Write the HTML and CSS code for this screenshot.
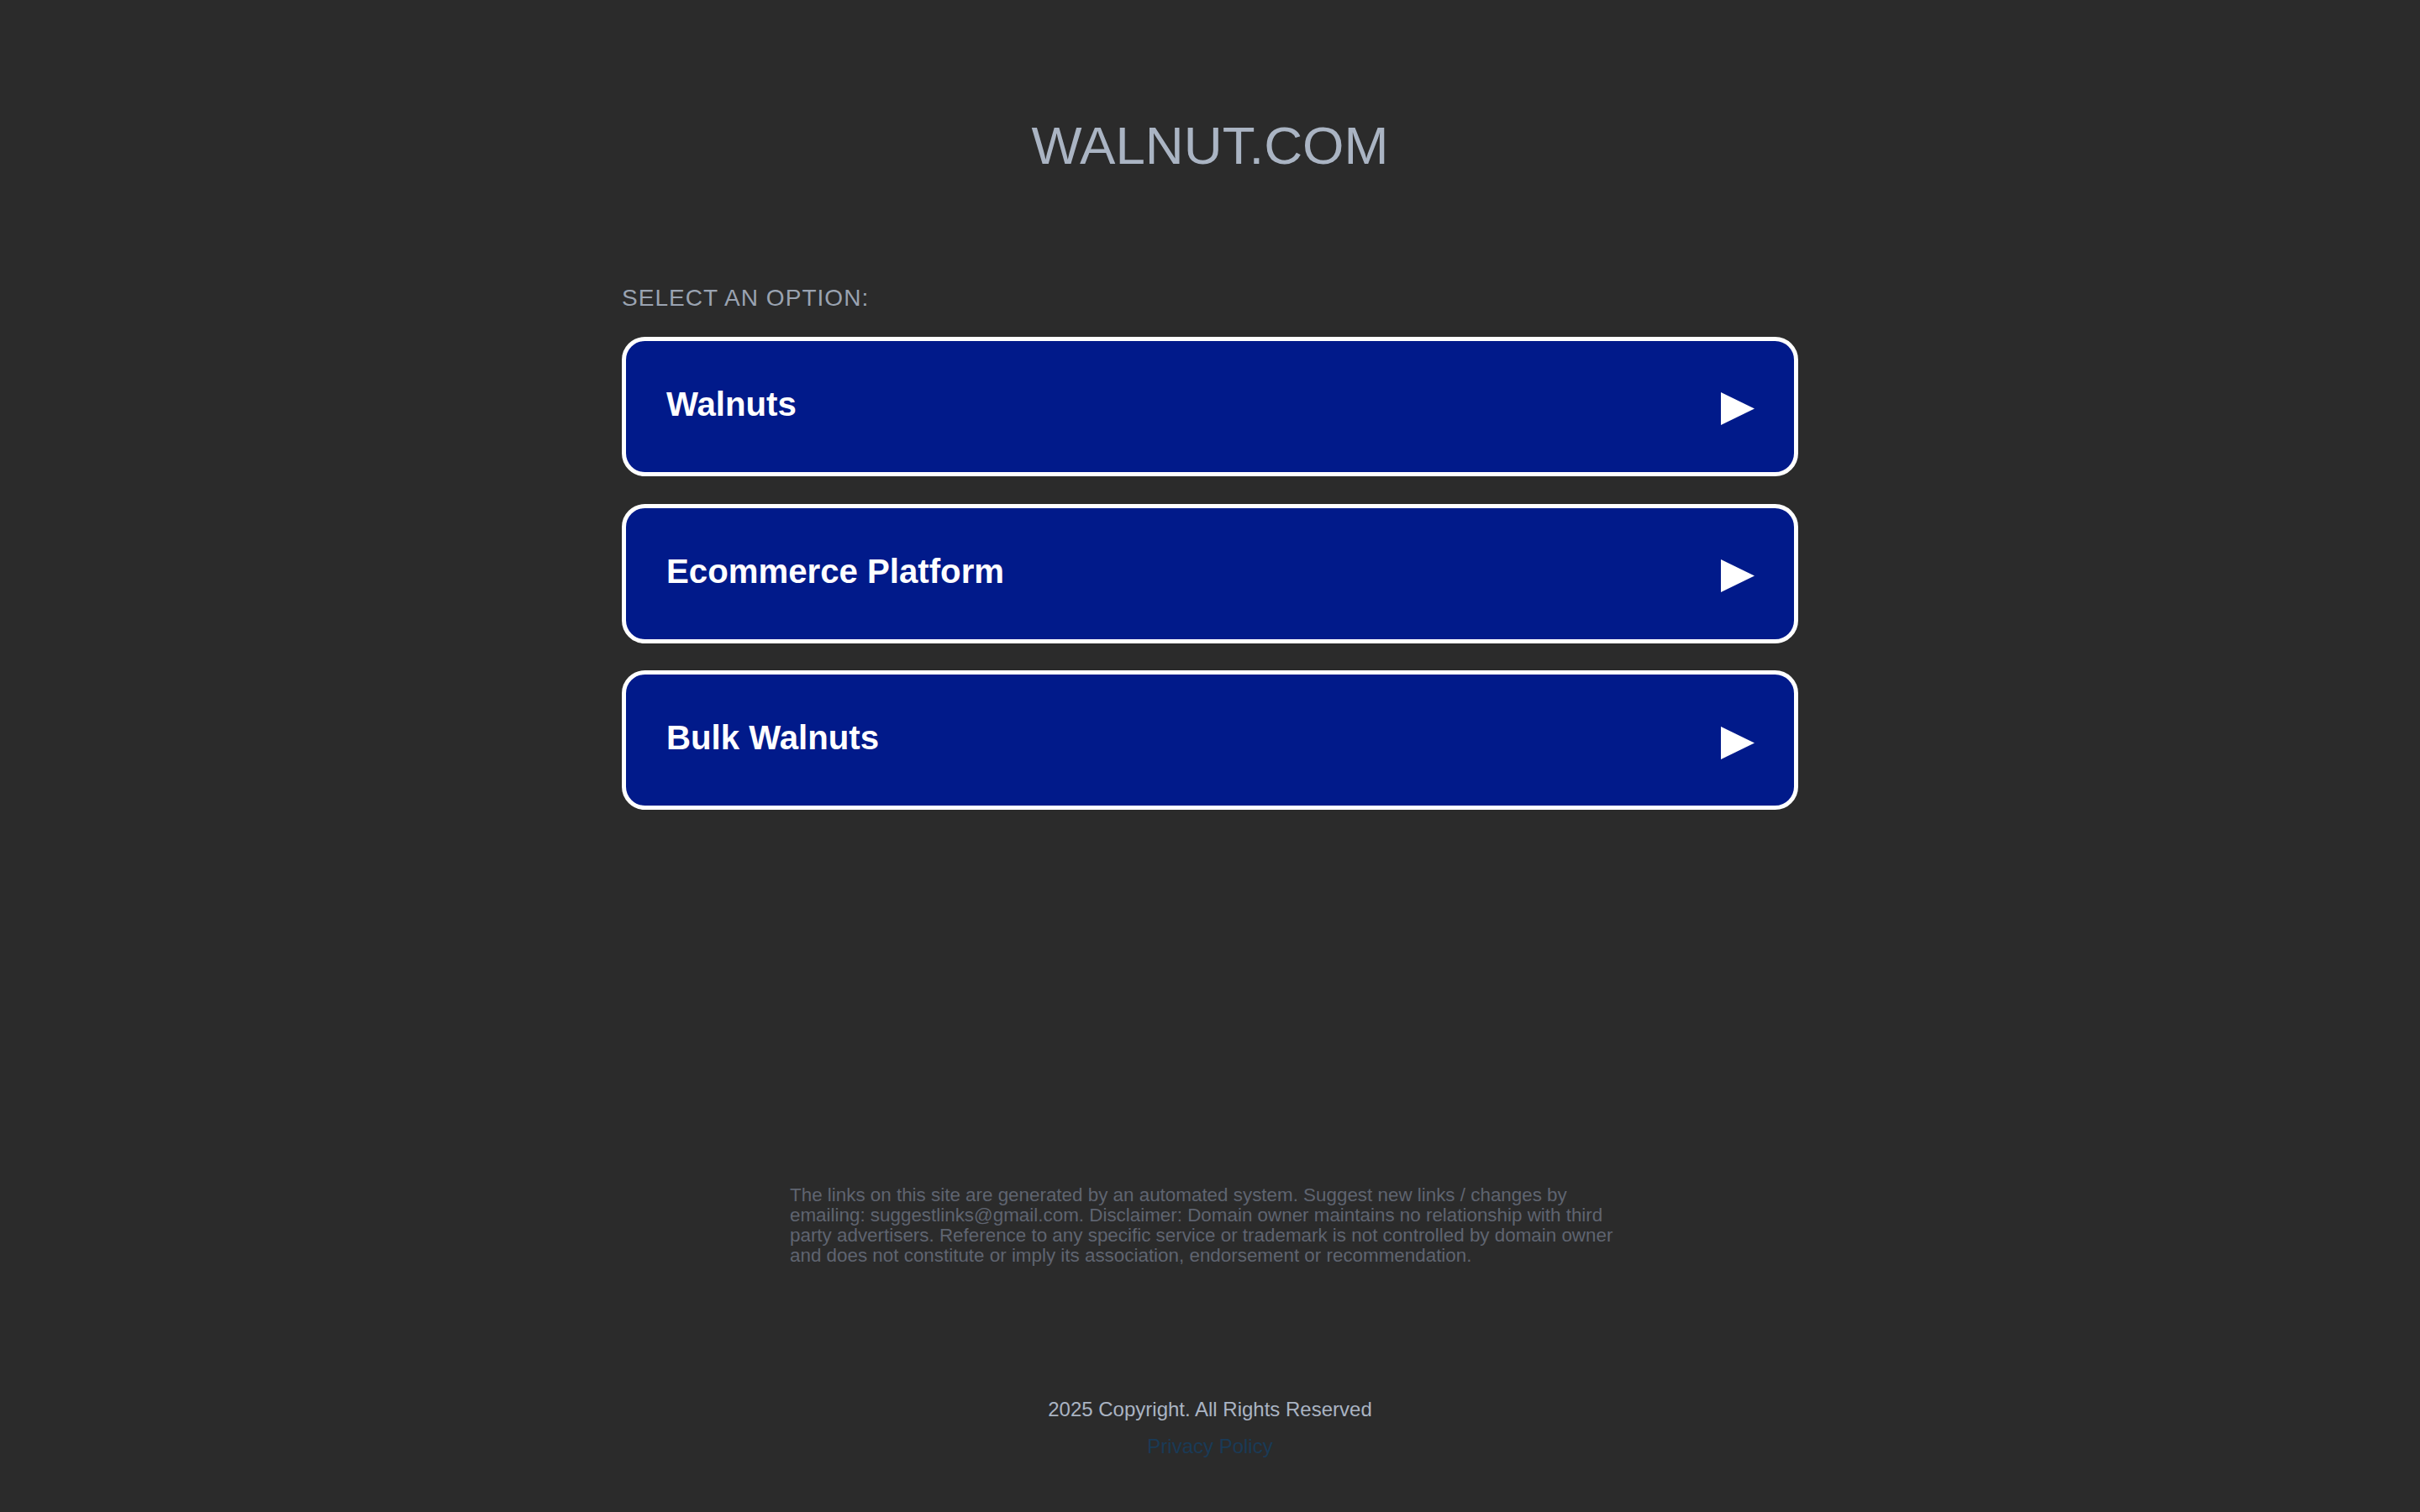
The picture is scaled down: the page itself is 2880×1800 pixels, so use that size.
FILE: index.html
```html
<!DOCTYPE html>
<html lang="en">
<head>
<meta charset="utf-8">
<title>walnut.com</title>
<link rel="stylesheet" href="styles.css">
</head>
<body>
<header class="site-header">
  <h1 class="site-title">WALNUT.COM</h1>
</header>
<main class="options">
  <div class="options-label">SELECT AN OPTION:</div>
  <ul class="option-list">
    <li><a class="option" href="#"><span class="option-text">Walnuts</span><svg class="option-arrow" width="40" height="39" viewBox="0 0 40 39"><polygon points="0,0 40,19.5 0,39" fill="#ffffff"/></svg></a></li>
    <li><a class="option" href="#"><span class="option-text">Ecommerce Platform</span><svg class="option-arrow" width="40" height="39" viewBox="0 0 40 39"><polygon points="0,0 40,19.5 0,39" fill="#ffffff"/></svg></a></li>
    <li><a class="option" href="#"><span class="option-text">Bulk Walnuts</span><svg class="option-arrow" width="40" height="39" viewBox="0 0 40 39"><polygon points="0,0 40,19.5 0,39" fill="#ffffff"/></svg></a></li>
  </ul>
</main>
<section class="disclaimer">
  <p>The links on this site are generated by an automated system. Suggest new links / changes by emailing: suggestlinks@gmail.com. Disclaimer: Domain owner maintains no relationship with third party advertisers. Reference to any specific service or trademark is not controlled by domain owner and does not constitute or imply its association, endorsement or recommendation.</p>
</section>
<footer class="site-footer">
  <div class="copyright">2025 Copyright. All Rights Reserved</div>
  <a class="privacy" href="#">Privacy Policy</a>
</footer>
</body>
</html>
```
FILE: styles.css
```css
html, body {
  margin: 0;
  padding: 0;
}
body {
  background: #2b2b2b;
  font-family: "Liberation Sans", Arial, sans-serif;
  min-height: 100vh;
}
.site-header {
  padding-top: 136.5px;
  text-align: center;
}
.site-title {
  margin: 0;
  font-size: 63.6px;
  line-height: 72px;
  font-weight: normal;
  color: #aab4c3;
}
.options {
  width: 1400px;
  margin: 130.1px auto 0;
}
.options-label {
  font-size: 28px;
  line-height: 32px;
  letter-spacing: 1.05px;
  color: #9aa3b1;
}
.option-list {
  list-style: none;
  margin: 30.4px 0 0;
  padding: 0;
  display: flex;
  flex-direction: column;
  gap: 32.65px;
}
.option {
  box-sizing: border-box;
  height: 166px;
  display: flex;
  align-items: center;
  justify-content: space-between;
  padding: 0 47px 0 48px;
  background: #011a8a;
  border: 5.5px solid #ffffff;
  border-radius: 27.5px;
  text-decoration: none;
}
.option-text {
  font-size: 40.2px;
  line-height: 46px;
  font-weight: bold;
  color: #ffffff;
  padding-bottom: 4px;
}
.option-arrow {
  display: block;
  margin-top: 6px;
}
.disclaimer {
  width: 1000px;
  margin: 446.4px auto 0;
}
.disclaimer p {
  margin: 0;
  font-size: 22.4px;
  line-height: 24px;
  color: #5f6470;
}
.site-footer {
  margin-top: 157px;
  text-align: center;
}
.copyright {
  font-size: 24px;
  line-height: 28px;
  color: #aab4c3;
}
.privacy {
  display: inline-block;
  margin-top: 16px;
  font-size: 24px;
  line-height: 28px;
  color: #1a3a56;
  text-decoration: none;
}
```
